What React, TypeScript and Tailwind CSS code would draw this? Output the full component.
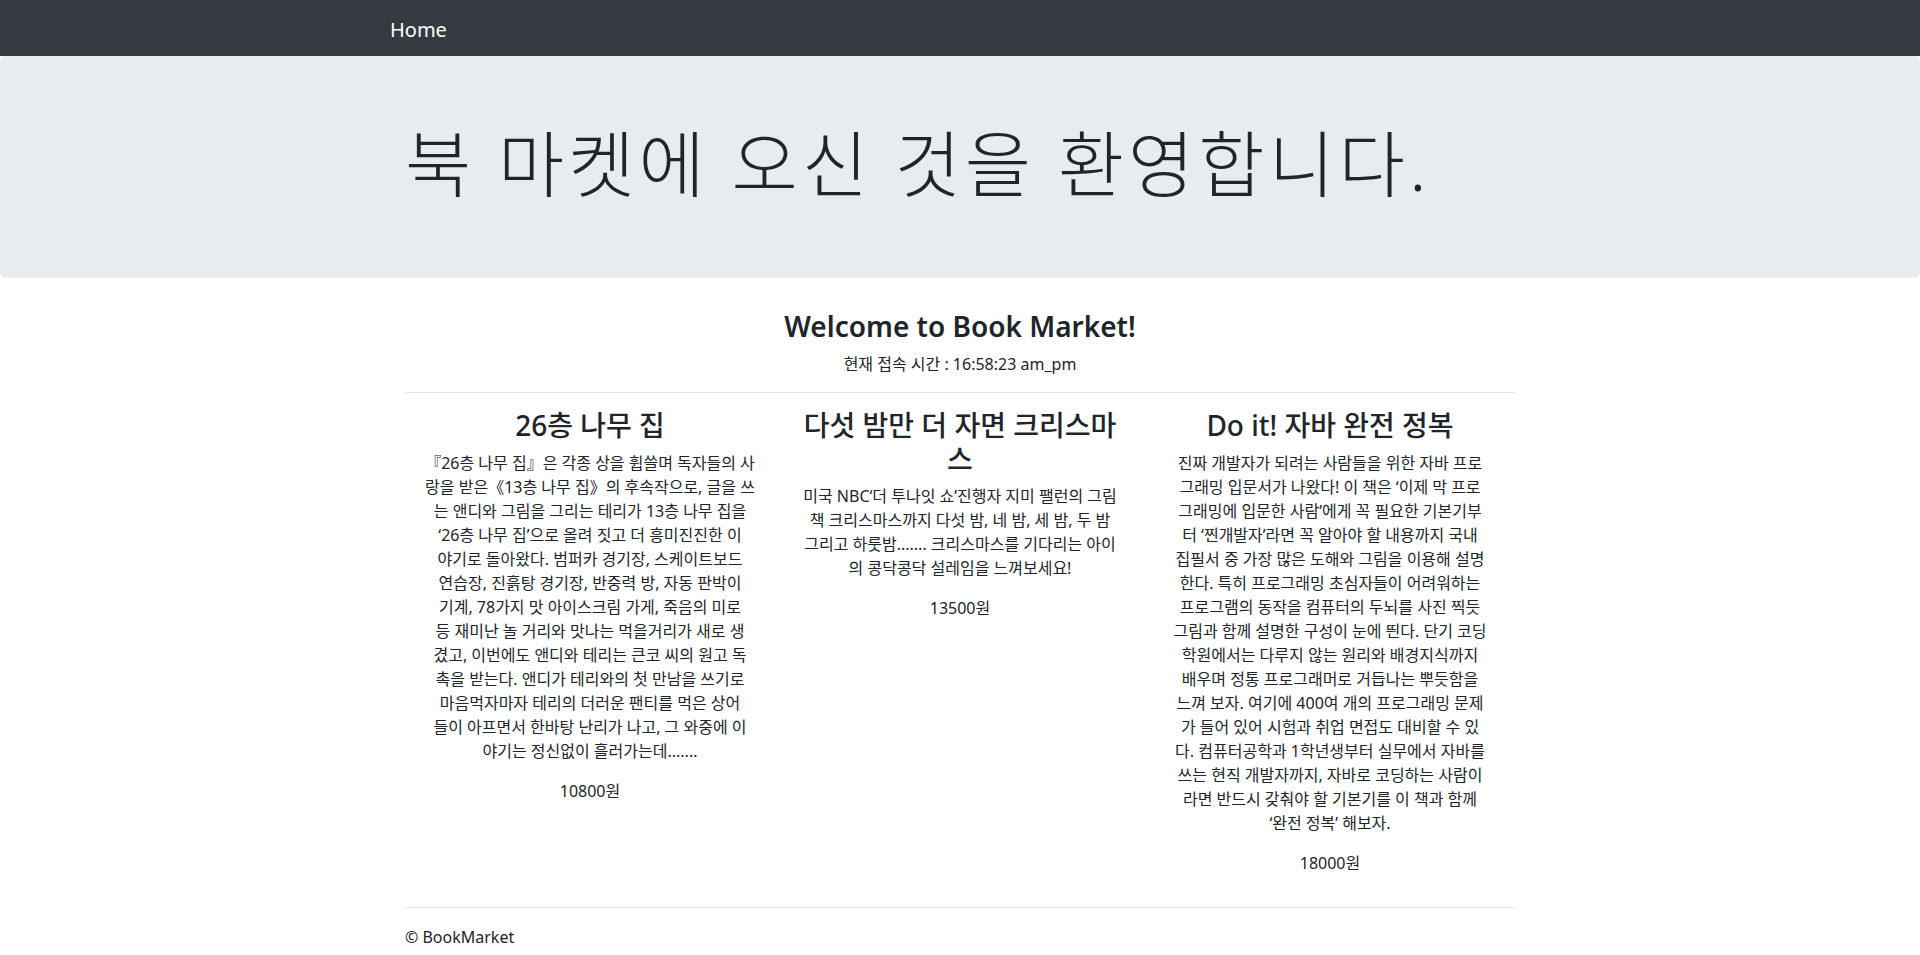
import React from "react";

const FONT = { fontFamily: '"Noto Sans", "Noto Sans CJK KR", sans-serif' };

type Book = { title: string[]; lines: string[]; price: string };

const books: Book[] = [
  {
    title: ["26층 나무 집"],
    lines: [
      "『26층 나무 집』은 각종 상을 휩쓸며 독자들의 사",
      "랑을 받은《13층 나무 집》의 후속작으로, 글을 쓰",
      "는 앤디와 그림을 그리는 테리가 13층 나무 집을",
      "‘26층 나무 집’으로 올려 짓고 더 흥미진진한 이",
      "야기로 돌아왔다. 범퍼카 경기장, 스케이트보드",
      "연습장, 진흙탕 경기장, 반중력 방, 자동 판박이",
      "기계, 78가지 맛 아이스크림 가게, 죽음의 미로",
      "등 재미난 놀 거리와 맛나는 먹을거리가 새로 생",
      "겼고, 이번에도 앤디와 테리는 큰코 씨의 원고 독",
      "촉을 받는다. 앤디가 테리와의 첫 만남을 쓰기로",
      "마음먹자마자 테리의 더러운 팬티를 먹은 상어",
      "들이 아프면서 한바탕 난리가 나고, 그 와중에 이",
      "야기는 정신없이 흘러가는데.......",
    ],
    price: "10800원",
  },
  {
    title: ["다섯 밤만 더 자면 크리스마", "스"],
    lines: [
      "미국 NBC‘더 투나잇 쇼’진행자 지미 팰런의 그림",
      "책 크리스마스까지 다섯 밤, 네 밤, 세 밤, 두 밤",
      "그리고 하룻밤....... 크리스마스를 기다리는 아이",
      "의 콩닥콩닥 설레임을 느껴보세요!",
    ],
    price: "13500원",
  },
  {
    title: ["Do it! 자바 완전 정복"],
    lines: [
      "진짜 개발자가 되려는 사람들을 위한 자바 프로",
      "그래밍 입문서가 나왔다! 이 책은 ‘이제 막 프로",
      "그래밍에 입문한 사람’에게 꼭 필요한 기본기부",
      "터 ‘찐개발자’라면 꼭 알아야 할 내용까지 국내",
      "집필서 중 가장 많은 도해와 그림을 이용해 설명",
      "한다. 특히 프로그래밍 초심자들이 어려워하는",
      "프로그램의 동작을 컴퓨터의 두뇌를 사진 찍듯",
      "그림과 함께 설명한 구성이 눈에 띈다. 단기 코딩",
      "학원에서는 다루지 않는 원리와 배경지식까지",
      "배우며 정통 프로그래머로 거듭나는 뿌듯함을",
      "느껴 보자. 여기에 400여 개의 프로그래밍 문제",
      "가 들어 있어 시험과 취업 면접도 대비할 수 있",
      "다. 컴퓨터공학과 1학년생부터 실무에서 자바를",
      "쓰는 현직 개발자까지, 자바로 코딩하는 사람이",
      "라면 반드시 갖춰야 할 기본기를 이 책과 함께",
      "‘완전 정복’ 해보자.",
    ],
    price: "18000원",
  },
];

export default function App() {
  return (
    <div className="min-h-screen bg-white text-[#212529] text-[16px] leading-[24px]" style={FONT}>
      <nav className="bg-[#343a40] h-[56px] flex items-center">
        <div className="w-[1140px] mx-auto pt-[3px]">
          <a className="text-white text-[20px] leading-[30px]">Home</a>
        </div>
      </nav>

      <div className="bg-[#e9ecef] rounded-[5px] py-[64px] mb-[32px]">
        <div className="w-[1140px] mx-auto px-[15px]">
          <h1 className="text-[72px] leading-[86.4px] font-light tracking-[4px] mb-[8px]">북 마켓에 오신 것을 환영합니다.</h1>
        </div>
      </div>

      <div className="w-[1140px] mx-auto px-[15px]">
        <div className="text-center">
          <h3 className="text-[28px] leading-[33.6px] font-semibold mb-[8px]">Welcome to Book Market!</h3>
          <p className="mb-[16px]">현재 접속 시간 : 16:58:23 am_pm</p>
        </div>
        <hr className="border-0 border-t border-[rgba(0,0,0,0.1)] my-0" />

        <div className="grid grid-cols-3 mt-[16px]">
          {books.map((b, i) => (
            <div key={i} className="px-[15px] text-center">
              <h3 className="text-[28px] leading-[33.6px] font-medium mb-[8px]">
                {b.title.map((t, j) => (
                  <span key={j} className="block whitespace-nowrap">{t}</span>
                ))}
              </h3>
              <p className="mb-[16px]">
                {b.lines.map((l, j) => (
                  <span key={j} className="block whitespace-nowrap">{l}</span>
                ))}
              </p>
              <p className="mb-[16px]">{b.price}</p>
            </div>
          ))}
        </div>

        <hr className="border-0 border-t border-[rgba(0,0,0,0.1)] mt-[16px] mb-0" />
        <footer className="pt-[17px] pb-[8px]">
          <p>© BookMarket</p>
        </footer>
      </div>
    </div>
  );
}
